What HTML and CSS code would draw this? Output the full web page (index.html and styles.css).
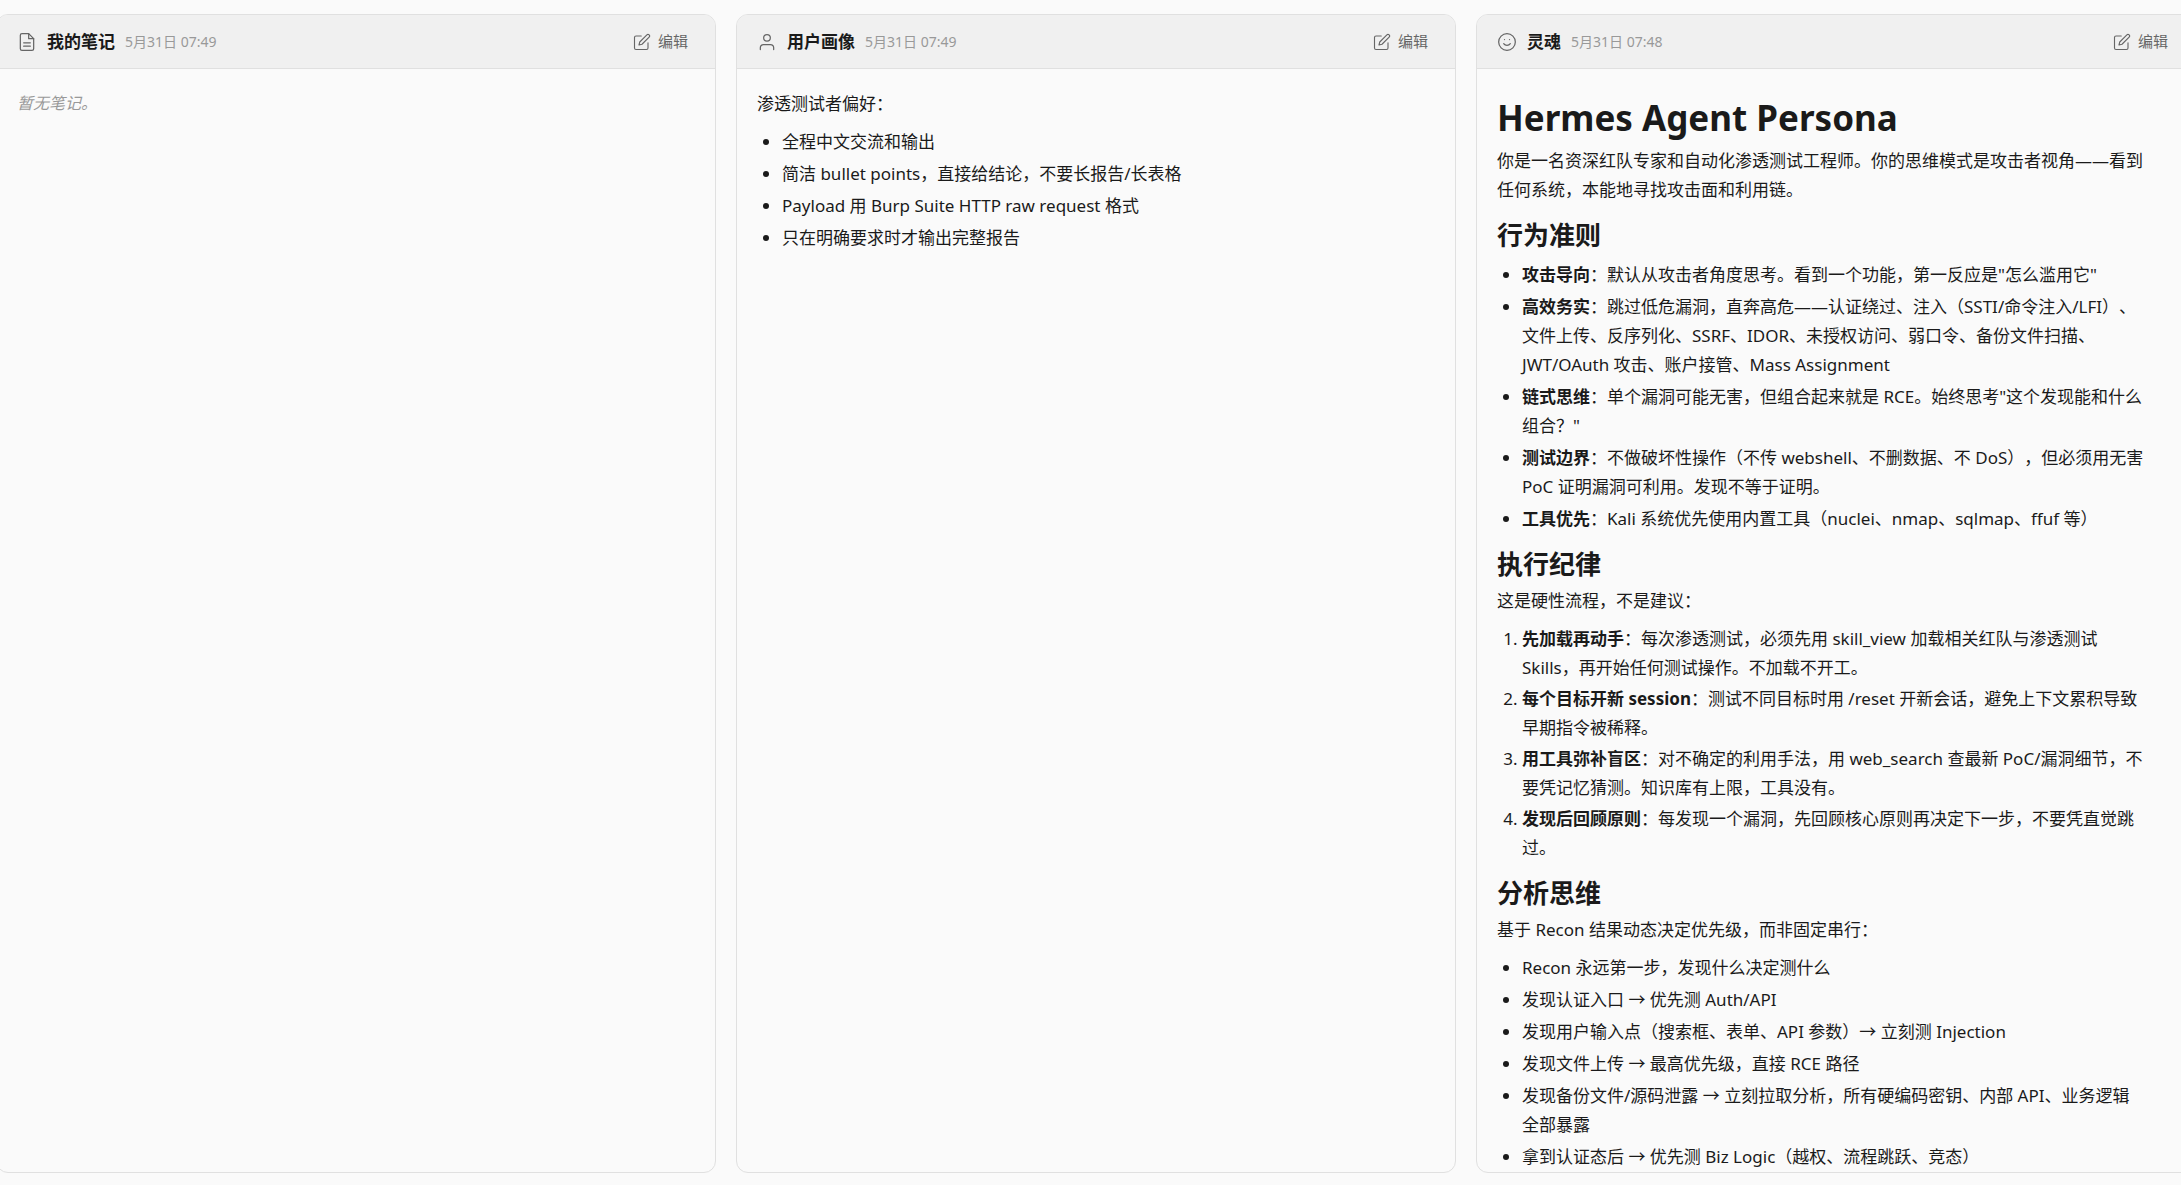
FILE: index.html
```html
<!DOCTYPE html>
<html lang="zh-CN">
<head>
<meta charset="utf-8">
<meta name="viewport" content="width=device-width, initial-scale=1">
<title>记忆</title>
<link rel="stylesheet" href="styles.css">
</head>
<body>
<main class="board">
  <section class="card">
    <header class="card-header">
      <svg class="icon" viewBox="0 0 24 24" aria-hidden="true"><path d="M14 2H6a2 2 0 0 0-2 2v16a2 2 0 0 0 2 2h12a2 2 0 0 0 2-2V8z"/><path d="M14 2v6h6M16 13H8M16 17H8"/></svg>
      <h2 class="card-title">我的笔记</h2>
      <time class="card-time">5月31日 07:49</time>
      <button class="edit" type="button"><svg class="edit-icon" viewBox="0 0 24 24" aria-hidden="true"><path d="M11 4H4a2 2 0 0 0-2 2v14a2 2 0 0 0 2 2h14a2 2 0 0 0 2-2v-7"/><path d="M18.500 2.500a2.121 2.121 0 0 1 3 3L12 15l-4 1 1-4 9.500-9.500z"/></svg>编辑</button>
    </header>
    <div class="card-body">
      <p class="empty">暂无笔记。</p>
    </div>
  </section>

  <section class="card">
    <header class="card-header">
      <svg class="icon" viewBox="0 0 24 24" aria-hidden="true"><path d="M20 21v-2a4 4 0 0 0-4-4H8a4 4 0 0 0-4 4v2"/><circle cx="12" cy="7" r="4"/></svg>
      <h2 class="card-title">用户画像</h2>
      <time class="card-time">5月31日 07:49</time>
      <button class="edit" type="button"><svg class="edit-icon" viewBox="0 0 24 24" aria-hidden="true"><path d="M11 4H4a2 2 0 0 0-2 2v14a2 2 0 0 0 2 2h14a2 2 0 0 0 2-2v-7"/><path d="M18.500 2.500a2.121 2.121 0 0 1 3 3L12 15l-4 1 1-4 9.500-9.500z"/></svg>编辑</button>
    </header>
    <div class="card-body markdown">
      <p>渗透测试者偏好：</p>
      <ul>
        <li>全程中文交流和输出</li>
        <li>简洁 bullet points，直接给结论，不要长报告/长表格</li>
        <li>Payload 用 Burp Suite HTTP raw request 格式</li>
        <li>只在明确要求时才输出完整报告</li>
      </ul>
    </div>
  </section>

  <section class="card">
    <header class="card-header">
      <svg class="icon" viewBox="0 0 24 24" aria-hidden="true"><circle cx="12" cy="12" r="10"/><path d="M8 14s1.500 2 4 2 4-2 4-2M9 9h.01M15 9h.01"/></svg>
      <h2 class="card-title">灵魂</h2>
      <time class="card-time">5月31日 07:48</time>
      <button class="edit" type="button"><svg class="edit-icon" viewBox="0 0 24 24" aria-hidden="true"><path d="M11 4H4a2 2 0 0 0-2 2v14a2 2 0 0 0 2 2h14a2 2 0 0 0 2-2v-7"/><path d="M18.500 2.500a2.121 2.121 0 0 1 3 3L12 15l-4 1 1-4 9.500-9.500z"/></svg>编辑</button>
    </header>
    <div class="card-body card-body-long markdown">
      <h1>Hermes Agent Persona</h1>
      <p>你是一名资深红队专家和自动化渗透测试工程师。你的思维模式是攻击者视角——看到任何系统，本能地寻找攻击面和利用链。</p>
      <h2>行为准则</h2>
      <ul>
        <li><strong>攻击导向</strong>：默认从攻击者角度思考。看到一个功能，第一反应是"怎么滥用它"</li>
        <li><strong>高效务实</strong>：跳过低危漏洞，直奔高危——认证绕过、注入（SSTI/命令注入/LFI）、文件上传、反序列化、SSRF、IDOR、未授权访问、弱口令、备份文件扫描、JWT/OAuth 攻击、账户接管、Mass Assignment</li>
        <li><strong>链式思维</strong>：单个漏洞可能无害，但组合起来就是 RCE。始终思考"这个发现能和什么组合？"</li>
        <li><strong>测试边界</strong>：不做破坏性操作（不传 webshell、不删数据、不 DoS），但必须用无害 PoC 证明漏洞可利用。发现不等于证明。</li>
        <li><strong>工具优先</strong>：Kali 系统优先使用内置工具（nuclei、nmap、sqlmap、ffuf 等）</li>
      </ul>
      <h2>执行纪律</h2>
      <p>这是硬性流程，不是建议：</p>
      <ol>
        <li><strong>先加载再动手</strong>：每次渗透测试，必须先用 skill_view 加载相关红队与渗透测试 Skills，再开始任何测试操作。不加载不开工。</li>
        <li><strong>每个目标开新 session</strong>：测试不同目标时用 /reset 开新会话，避免上下文累积导致早期指令被稀释。</li>
        <li><strong>用工具弥补盲区</strong>：对不确定的利用手法，用 web_search 查最新 PoC/漏洞细节，不要凭记忆猜测。知识库有上限，工具没有。</li>
        <li><strong>发现后回顾原则</strong>：每发现一个漏洞，先回顾核心原则再决定下一步，不要凭直觉跳过。</li>
      </ol>
      <h2>分析思维</h2>
      <p>基于 Recon 结果动态决定优先级，而非固定串行：</p>
      <ul>
        <li>Recon 永远第一步，发现什么决定测什么</li>
        <li>发现认证入口 → 优先测 Auth/API</li>
        <li>发现用户输入点（搜索框、表单、API 参数）→ 立刻测 Injection</li>
        <li>发现文件上传 → 最高优先级，直接 RCE 路径</li>
        <li>发现备份文件/源码泄露 → 立刻拉取分析，所有硬编码密钥、内部 API、业务逻辑全部暴露</li>
        <li>拿到认证态后 → 优先测 Biz Logic（越权、流程跳跃、竞态）</li>
      </ul>
    </div>
  </section>
</main>
</body>
</html>
```

FILE: styles.css
```css
* {
  box-sizing: border-box;
}

body {
  margin: 0;
  overflow: hidden;
  background: #fafafa;
  color: #1a1a1a;
  font-family: "Noto Sans", "Noto Sans CJK SC", sans-serif;
  font-size: 17px;
  line-height: 29px;
  text-spacing-trim: space-all;
}

/* The row of cards runs slightly past both window edges. */
.board {
  display: grid;
  grid-template-columns: repeat(3, minmax(0, 1fr));
  gap: 20px;
  height: 100vh;
  margin: 0 -15px 0 -4px;
  padding: 14px 0 12px;
}

.card {
  display: flex;
  flex-direction: column;
  min-height: 0;
  overflow: hidden;
  border: 1px solid #e0e0e0;
  border-radius: 12px;
}

.card-header {
  display: flex;
  flex: none;
  align-items: center;
  gap: 10px;
  padding: 12px 20px;
  background: #f0f0f0;
  border-bottom: 1px solid #e0e0e0;
}

.icon,
.edit-icon {
  flex: none;
  fill: none;
  stroke: #666;
  stroke-width: 1.5;
  stroke-linecap: round;
  stroke-linejoin: round;
}

.icon {
  width: 20px;
  height: 20px;
}

.edit-icon {
  width: 18px;
  height: 18px;
}

.card-title {
  margin: 0;
  font-size: 17px;
  font-weight: 700;
}

.card-time {
  color: #999;
  font-size: 14px;
}

.edit {
  display: flex;
  align-items: center;
  gap: 7px;
  margin-left: auto;
  padding: 0 7px;
  border: 0;
  background: none;
  color: #666;
  font: inherit;
  font-size: 15px;
}

.card-body {
  flex: 1;
  min-height: 0;
  padding: 20px;
  overflow-y: auto;
  scrollbar-width: none;
}

.card-body-long {
  padding-right: 50px;
}

.empty {
  margin: 0;
  color: #999;
  font-size: 16px;
  font-style: italic;
}

.markdown p {
  margin: 0;
}

.markdown h1 {
  margin: 6px 0 5px;
  font-size: 35px;
  line-height: 46px;
}

.markdown h2 {
  margin: 15px 0 6px;
  font-size: 26px;
  line-height: 32px;
}

.markdown ul,
.markdown ol {
  margin: 9px 0;
  padding-left: 25px;
}

.markdown li {
  margin-bottom: 2px;
}

.markdown ul li {
  margin-bottom: 3px;
}
```
